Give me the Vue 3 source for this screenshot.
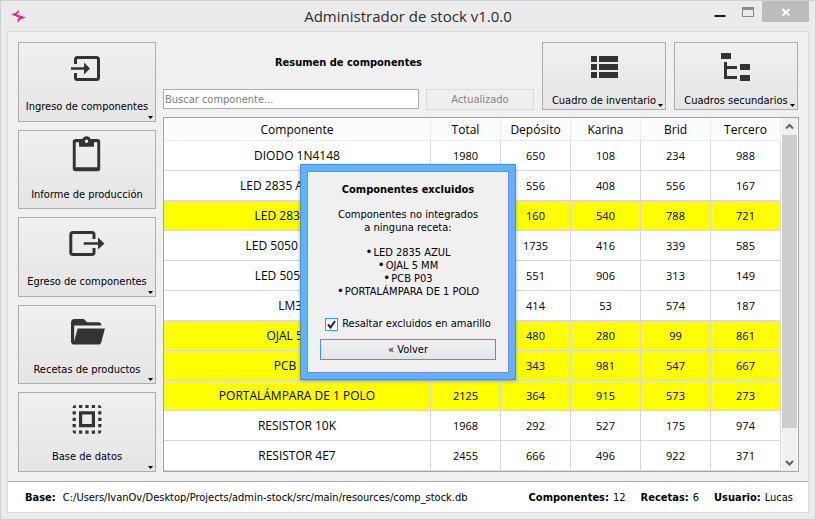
<script setup>
import { ref } from 'vue'

const menu = [
  { label: 'Ingreso de componentes', icon: 'in', drop: true },
  { label: 'Informe de producción', icon: 'clipboard', drop: false },
  { label: 'Egreso de componentes', icon: 'out', drop: true },
  { label: 'Recetas de productos', icon: 'folder', drop: true },
  { label: 'Base de datos', icon: 'select', drop: true },
]

const columns = ['Componente', 'Total', 'Depósito', 'Karina', 'Brid', 'Tercero']

const rows = [
  { name: 'DIODO 1N4148', values: [1980, 650, 108, 234, 988] },
  { name: 'LED 2835 AMARILLO', values: ['', 556, 408, 556, 167] },
  { name: 'LED 2835 AZUL', values: ['', 160, 540, 788, 721], excluded: true },
  { name: 'LED 5050 BLANCO', values: ['', 1735, 416, 339, 585] },
  { name: 'LED 5050 ROJO', values: ['', 551, 906, 313, 149] },
  { name: 'LM317', values: ['', 414, 53, 574, 187] },
  { name: 'OJAL 5 MM', values: ['', 480, 280, 99, 861], excluded: true },
  { name: 'PCB P03', values: ['', 343, 981, 547, 667], excluded: true },
  { name: 'PORTALÁMPARA DE 1 POLO', values: [2125, 364, 915, 573, 273], excluded: true },
  { name: 'RESISTOR 10K', values: [1968, 292, 527, 175, 974] },
  { name: 'RESISTOR 4E7', values: [2455, 666, 496, 922, 371] },
]

const excluded = ['LED 2835 AZUL', 'OJAL 5 MM', 'PCB P03', 'PORTALÁMPARA DE 1 POLO']
const highlight = ref(true)
const search = ref('')
</script>

<template>
  <div class="window">
    <header class="titlebar">
      <svg class="logo" viewBox="0 0 16 14" aria-hidden="true">
        <path d="M0 5.500 5 3.800 7.700 0.500V3.900L5.200 5.200 14.800 8.400 9.600 10.200 6.500 13.800V10.300L8.800 8.800Z" fill="#ec1c8e" />
      </svg>
      <h1>Administrador de stock v1.0.0</h1>
      <div class="controls">
        <button type="button" aria-label="Minimizar">
          <svg viewBox="0 0 12 12"><path d="M0.5 9h11v2h-11z" fill="#1a1a1a" /></svg>
        </button>
        <button type="button" aria-label="Maximizar">
          <svg viewBox="0 0 12 12"><path d="M0 1h12v10H0zM1 4v6h10V4z" fill="#8a8a8a" fill-rule="evenodd" /></svg>
        </button>
        <button type="button" class="close" aria-label="Cerrar">
          <svg viewBox="0 0 12 12"><path d="M2.500 3l7 6.500M9.500 3l-7 6.500" stroke="#fff" stroke-width="2.200" /></svg>
        </button>
      </div>
    </header>

    <div class="panel">
      <div class="body">
        <nav class="sidebar">
          <button v-for="item in menu" :key="item.label" type="button" class="tool">
            <svg v-if="item.icon === 'in'" class="icon" viewBox="0 0 40 40">
              <path d="M8.500 16V11.500a2 2 0 0 1 2-2h19a2 2 0 0 1 2 2v18a2 2 0 0 1-2 2h-19a2 2 0 0 1-2-2V25" class="line" />
              <path d="M4 19.200h13V14.500l6 6-6 6v-4.700H4z" />
            </svg>
            <svg v-else-if="item.icon === 'clipboard'" class="icon" viewBox="0 0 40 40">
              <path fill-rule="evenodd" d="M8.500 3H15.400a4.400 4.400 0 0 1 8.200 0H30.500a2.700 2.700 0 0 1 2.700 2.700V32.500a2.700 2.700 0 0 1-2.700 2.700H8.500a2.700 2.700 0 0 1-2.700-2.700V5.700A2.700 2.700 0 0 1 8.500 3zM8.700 6.200V31.200H30.300V6.200H27V10.700H12V6.200zM19.500 3.600a1.700 1.700 0 1 0 0 3.400 1.700 1.700 0 0 0 0-3.400z" />
            </svg>
            <svg v-else-if="item.icon === 'out'" class="icon" viewBox="0 0 40 40">
              <path d="M27 16V11.500a2 2 0 0 0-2-2H5.800a2 2 0 0 0-2 2v18a2 2 0 0 0 2 2H25a2 2 0 0 0 2-2V25" class="line" />
              <path d="M16.700 19.200H31V14.500l6.500 6-6.500 6v-4.700H16.700z" />
            </svg>
            <svg v-else-if="item.icon === 'folder'" class="icon" viewBox="-0.5 -1 25 25">
              <path d="M19 20H4c-1.110 0-2-.9-2-2V6c0-1.110.890-2 2-2h6l2 2h7a2 2 0 0 1 2 2H4v10l2.140-8h17.070l-2.280 8.500c-.230.870-1.010 1.500-1.930 1.500z" />
            </svg>
            <svg v-else class="icon" viewBox="-0.5 -1.300 25 25">
              <path fill-rule="evenodd" d="M7 7h10v10H7zM9 9v6h6V9zM7 3h2v2H7zM11 3h2v2h-2zM15 3h2v2h-2zM7 19h2v2H7zM11 19h2v2h-2zM15 19h2v2h-2zM3 7h2v2H3zM3 11h2v2H3zM3 15h2v2H3zM19 7h2v2h-2zM19 11h2v2h-2zM19 15h2v2h-2zM5 3v2H3a2 2 0 0 1 2-2zM19 3a2 2 0 0 1 2 2h-2zM3 19h2v2a2 2 0 0 1-2-2zM19 19h2a2 2 0 0 1-2 2z" />
            </svg>
            <span>{{ item.label }}</span>
            <svg v-if="item.drop" class="caret" viewBox="0 0 5 3"><path d="M0 0h5L2.500 3z" /></svg>
          </button>
        </nav>

        <main class="main">
          <div class="top">
            <div class="finder">
              <h2>Resumen de componentes</h2>
              <div class="search">
                <input v-model="search" type="text" placeholder="Buscar componente..." aria-label="Buscar componente">
                <button type="button" class="refresh" disabled>Actualizado</button>
              </div>
            </div>
            <button type="button" class="tool wide">
              <svg class="icon" viewBox="0 0 40 40">
                <path d="M7 9h6v6H7zM15 9h19v6H15zM7 17h6v6H7zM15 17h19v6H15zM7 25h6v6H7zM15 25h19v6H15z" />
              </svg>
              <span>Cuadro de inventario</span>
              <svg class="caret" viewBox="0 0 5 3"><path d="M0 0h5L2.500 3z" /></svg>
            </button>
            <button type="button" class="tool wide">
              <svg class="icon" viewBox="0 0 40 40">
                <path d="M5 6h10v6H5zM8 15h3v4h10v3H11v7h10v3H8zM24 17h10v6H24zM24 28h10v6H24z" />
              </svg>
              <span>Cuadros secundarios</span>
              <svg class="caret" viewBox="0 0 5 3"><path d="M0 0h5L2.500 3z" /></svg>
            </button>
          </div>

          <div class="grid">
            <table>
              <thead>
                <tr><th v-for="c in columns" :key="c" scope="col">{{ c }}</th></tr>
              </thead>
              <tbody>
                <tr v-for="r in rows" :key="r.name" :class="{ marked: r.excluded && highlight }">
                  <td>{{ r.name }}</td>
                  <td v-for="(v, i) in r.values" :key="i" class="num">{{ v }}</td>
                </tr>
              </tbody>
            </table>
            <div class="scrollbar" aria-hidden="true">
              <svg viewBox="0 0 15 17"><path d="M4 10.500l3.500-3.500 3.500 3.500" /></svg>
              <div class="track"><div class="thumb"></div></div>
              <svg viewBox="0 0 15 17"><path d="M4 7l3.500 3.500L11 7" /></svg>
            </div>
          </div>
        </main>
      </div>

      <footer class="status">
        <p class="path"><b>Base:</b><span>C:/Users/IvanOv/Desktop/Projects/admin-stock/src/main/resources/comp_stock.db</span></p>
        <p><b>Componentes:</b><span>12</span></p>
        <p><b>Recetas:</b><span>6</span></p>
        <p><b>Usuario:</b><span>Lucas</span></p>
      </footer>

      <div class="overlay">
        <section class="dialog" role="dialog" aria-labelledby="dlg-title">
          <h2 id="dlg-title">Componentes excluidos</h2>
          <p>Componentes no integrados<br>a ninguna receta:</p>
          <ul>
            <li v-for="e in excluded" :key="e">{{ e }}</li>
          </ul>
          <label class="check">
            <input v-model="highlight" type="checkbox">
            <svg viewBox="0 0 13 13" aria-hidden="true"><path d="M3 6.500l2.500 3L10 3" /></svg>
            <span>Resaltar excluidos en amarillo</span>
          </label>
          <button type="button" class="back">« Volver</button>
        </section>
      </div>
    </div>
  </div>
</template>

<style>
body {
  margin: 0;
}
</style>

<style scoped>
* {
  box-sizing: border-box;
}
.window {
  display: flex;
  flex-direction: column;
  min-height: 100vh;
  padding: 0 6px 6px;
  border: 1px solid #cfcfcf;
  background: #ebebeb;
  color: #000;
  font-family: "DejaVu Sans Condensed", "DejaVu Sans", sans-serif;
  font-size: 11px;
  line-height: 16px;
}
h1,
h2,
p,
ul {
  margin: 0;
  padding: 0;
}
h2 {
  font-size: 11px;
  line-height: 16px;
  text-align: center;
}
button,
input {
  margin: 0;
  font: inherit;
  color: inherit;
}
.titlebar {
  display: grid;
  grid-template-columns: 1fr auto 1fr;
  height: 30px;
}
.logo {
  width: 16px;
  height: 14px;
  margin: 8px 0 0 4px;
}
h1 {
  color: #2b2b2b;
  font: 15px/30px "Open Sans", sans-serif;
}
.controls {
  display: flex;
  justify-content: flex-end;
  align-items: flex-start;
}
.controls button {
  display: flex;
  align-items: center;
  justify-content: center;
  width: 28px;
  height: 21px;
  padding: 0;
  border: 0;
  background: none;
}
.controls .close {
  width: 47px;
  background: #bcbcbc;
}
.controls svg {
  width: 12px;
  height: 12px;
}
.panel {
  position: relative;
  display: flex;
  flex: 1;
  flex-direction: column;
  border: 1px solid #d9d9d9;
  background: #f0f0f0;
}
.body {
  display: flex;
  flex: 1;
  gap: 7px;
  padding: 10px 9px 9px 10px;
}
.sidebar {
  display: flex;
  flex: 0 0 138px;
  flex-direction: column;
  gap: 8px;
}
.tool {
  position: relative;
  display: flex;
  flex: 1;
  flex-direction: column;
  align-items: center;
  gap: 11px;
  padding: 5px 0 4px;
  border: 1px solid #adadad;
  background: linear-gradient(#f0f0f0, #e5e5e5);
}
.wide {
  flex: 0 0 124px;
  gap: 6px;
  padding: 4px 0 0;
}
.icon {
  width: 40px;
  height: 40px;
  fill: #333;
}
.line {
  fill: none;
  stroke: #333;
  stroke-width: 3;
}
.caret {
  position: absolute;
  right: 2px;
  bottom: 2px;
  width: 5px;
  height: 3px;
}
.main {
  display: flex;
  flex: 1;
  flex-direction: column;
  gap: 7px;
}
.top {
  display: flex;
  gap: 8px;
  height: 68px;
  padding-right: 1px;
}
.finder {
  display: flex;
  flex: 1;
  flex-direction: column;
  justify-content: space-between;
  padding-top: 13px;
}
.search {
  display: flex;
  gap: 7px;
}
.search input {
  flex: 1;
  min-width: 0;
  height: 20px;
  padding: 1px 1px 0;
  border: 1px solid #abadb3;
  background: #fff;
}
.search input::placeholder {
  color: #808080;
  opacity: 1;
}
.refresh {
  width: 108px;
  height: 21px;
  padding: 1px 0 0;
  border: 1px solid #d9d9d9;
  background: #efefef;
  color: #838383;
}
.grid {
  display: flex;
  flex: 1;
  border: 1px solid #a5a5a5;
  background: #fff;
}
table {
  flex: 1;
  border-spacing: 0;
  table-layout: fixed;
  font-family: "Open Sans", sans-serif;
  font-size: 12px;
}
th {
  width: 70px;
  height: 23px;
  padding: 2px 0 0;
  border-right: 1px solid #e5effb;
  border-bottom: 1px solid #e5effb;
  background: #fcfcfc;
  font-weight: 400;
}
th:first-child {
  width: auto;
}
td {
  height: 30px;
  padding: 0;
  border-right: 1px solid #d8d8d8;
  border-bottom: 1px solid #d8d8d8;
  text-align: center;
}
.num {
  font-size: 11px;
}
.marked td {
  background: #ff0;
}
.scrollbar {
  display: flex;
  flex: 0 0 17px;
  flex-direction: column;
  border: solid #fff;
  border-width: 0 1px;
  background: #f0f0f0;
}
.scrollbar svg {
  width: 15px;
  height: 17px;
  fill: none;
  stroke: #606060;
  stroke-width: 2;
}
.track {
  flex: 1;
}
.thumb {
  height: 92%;
  background: #cdcdcd;
}
.status {
  display: flex;
  gap: 15px;
  height: 31px;
  padding: 1px 15px 0 17px;
  border-top: 1px solid #a5a5a5;
  background: #fff;
  line-height: 30px;
}
.status p {
  display: flex;
  gap: 4px;
  white-space: nowrap;
}
.status .path {
  flex: 1;
  gap: 7px;
}
.overlay {
  position: absolute;
  inset: 0;
  display: grid;
  place-items: center;
  pointer-events: none;
}
.dialog {
  display: flex;
  flex-direction: column;
  width: 216px;
  padding: 11px 13px 13px;
  border: 7px solid #64b0fa;
  outline: 1px solid #4a8fd0;
  outline-offset: -1px;
  background: #f0f0f0;
  box-shadow: inset 0 0 0 1px #5a9ad8, 0 1px 4px rgba(0, 0, 0, 0.3);
  line-height: 13px;
  text-align: center;
  pointer-events: auto;
}
.dialog p {
  margin-top: 10px;
}
.dialog ul {
  margin: 12px 0 18px;
  list-style: none;
}
.dialog li::before {
  content: "•";
  margin-right: 1px;
  font-size: 13px;
  line-height: 1px;
}
.check {
  position: relative;
  display: flex;
  gap: 4px;
  align-items: center;
  justify-content: center;
  line-height: 16px;
}
.check input {
  width: 13px;
  height: 13px;
  appearance: none;
  border: 1px solid #39f;
  background: #fff;
}
.check svg {
  width: 13px;
  height: 13px;
  margin-left: -17px;
  fill: none;
  stroke: #222;
  stroke-width: 2;
  visibility: hidden;
}
.check input:checked + svg {
  visibility: visible;
}
.back {
  height: 21px;
  margin-top: 7px;
  padding: 0;
  border: 1px solid #39f;
  background: linear-gradient(#f0f0f0, #e5e5e5);
}
</style>
